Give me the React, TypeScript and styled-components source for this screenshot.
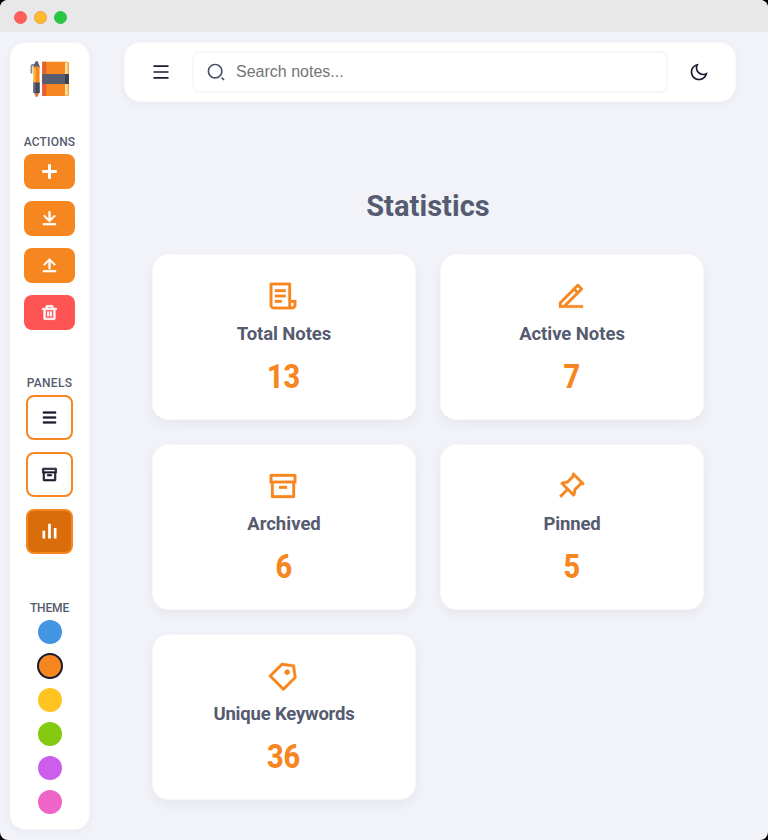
import React from "react";
import styled, { createGlobalStyle } from "styled-components";
import {
  RiAddLine,
  RiArchiveLine,
  RiBarChartLine,
  RiDeleteBinLine,
  RiDownloadLine,
  RiEdit2Line,
  RiFileList3Line,
  RiMenuLine,
  RiMoonLine,
  RiPriceTag3Line,
  RiPushpinLine,
  RiSearch2Line,
  RiUploadLine,
} from "react-icons/ri";

const GlobalStyle = createGlobalStyle`
  * { box-sizing: border-box; }
  body { margin: 0; background: #000; font-family: Roboto, sans-serif; }
  button { font: inherit; padding: 0; margin: 0; cursor: pointer; }
`;

const Window = styled.div`
  width: 768px;
  height: 840px;
  display: flex;
  flex-direction: column;
  overflow: hidden;
  border-radius: 8px;
  background: #f2f3f8;
`;

const TitleBar = styled.header`
  height: 32px;
  flex: none;
  display: flex;
  align-items: center;
  gap: 7px;
  padding: 2px 0 0 13.5px;
  background: #e8e8e8;
`;

const Light = styled.span<{ $fill: string; $edge: string }>`
  width: 13px;
  height: 13px;
  border-radius: 50%;
  background: ${(p) => p.$fill};
  border: 1px solid ${(p) => p.$edge};
`;

const Body = styled.div`
  flex: 1;
  min-height: 0;
  display: flex;
  gap: 34px;
  padding: 10px 32px 10px 10px;
`;

const Sidebar = styled.aside`
  width: 80px;
  flex: none;
  display: flex;
  flex-direction: column;
  align-items: center;
  padding: 16px 1px 0 0;
  background: #fff;
  border: 1px solid #f8f8fa;
  border-left-color: #fff;
  border-radius: 16px;
  box-shadow: 0 2px 8px rgba(30, 35, 60, 0.05);
`;

const Logo = styled.svg`
  width: 42px;
  height: 40px;
  flex: none;
  margin-bottom: 35px;
`;

const Group = styled.section<{ $gap: number; $after: number }>`
  display: flex;
  flex-direction: column;
  align-items: center;
  gap: ${(p) => p.$gap}px;
  margin-bottom: ${(p) => p.$after}px;
`;

const GroupLabel = styled.h2<{ $gap: number; $tracking: number }>`
  margin: 0 0 ${(p) => p.$gap}px;
  height: 16px;
  font-size: 12px;
  line-height: 16px;
  font-weight: 500;
  letter-spacing: ${(p) => p.$tracking}px;
  color: #555b6e;
`;

const ActionButton = styled.button<{ $danger?: boolean; $icon?: number }>`
  width: 51px;
  height: 35px;
  display: grid;
  place-items: center;
  border: 0;
  border-radius: 8px;
  color: #fff;
  background: ${(p) => (p.$danger ? "#ff5454" : "#f6861f")};
  svg {
    width: ${(p) => p.$icon ?? 17}px;
    height: ${(p) => p.$icon ?? 17}px;
    stroke: currentColor;
    stroke-width: 1.1;
  }
`;

const PanelButton = styled.button<{ $active?: boolean }>`
  width: 47px;
  height: 45px;
  display: grid;
  place-items: center;
  border: 2px solid #f6861f;
  border-radius: 8px;
  color: ${(p) => (p.$active ? "#fff" : "#1a1a2e")};
  background: ${(p) => (p.$active ? "#d96d0b" : "#fff")};
  svg {
    width: 17px;
    height: 17px;
    stroke: currentColor;
    stroke-width: ${(p) => (p.$active ? 1.8 : 1)};
  }
`;

const Swatch = styled.button<{ $color: string; $active?: boolean }>`
  width: ${(p) => (p.$active ? 26 : 24)}px;
  height: ${(p) => (p.$active ? 26 : 24)}px;
  margin: ${(p) => (p.$active ? "-1px -1px -1px 0" : "0 0 0 1px")};
  border-radius: 50%;
  border: ${(p) => (p.$active ? "2px solid #1a1a2e" : "0")};
  background: ${(p) => p.$color};
`;

const Content = styled.div`
  flex: 1;
  min-width: 0;
`;

const TopBar = styled.div`
  height: 60px;
  display: flex;
  align-items: center;
  padding: 0 26px;
  background: #fff;
  border: 1px solid #fafafc;
  border-radius: 16px;
  box-shadow: 0 2px 8px rgba(30, 35, 60, 0.05);
`;

const IconButton = styled.button`
  width: 20px;
  height: 20px;
  display: grid;
  place-items: center;
  border: 0;
  background: none;
  color: #1a1a2e;
  svg { width: 20px; height: 20px; }
`;

const Search = styled.label`
  flex: 1;
  height: 42px;
  margin: 0 21px;
  display: flex;
  align-items: center;
  gap: 10px;
  padding: 0 13px 0 12px;
  border: 2px solid #f7f7f8;
  border-radius: 8px;
  color: #4b5064;
  svg { width: 20px; height: 20px; flex: none; }
  input {
    flex: 1;
    min-width: 0;
    padding: 0;
    border: 0;
    outline: 0;
    background: none;
    font-family: "Liberation Sans", Arial, sans-serif;
    font-size: 16px;
  }
  input::placeholder { color: #757575; opacity: 1; }
`;

const Main = styled.main`
  padding: 83px 32px 0 28px;
`;

const Title = styled.h1`
  margin: 0 0 27px;
  height: 42px;
  line-height: 42px;
  text-align: center;
  font-size: 29px;
  font-weight: 700;
  letter-spacing: 0.05px;
  color: #555b70;
`;

const Cards = styled.div`
  display: grid;
  grid-template-columns: repeat(2, 264px);
  grid-auto-rows: 166px;
  gap: 24px;
`;

const Card = styled.article`
  display: flex;
  flex-direction: column;
  align-items: center;
  padding-top: 25px;
  background: #fff;
  border: 1px solid #f8f8fa;
  border-radius: 16px;
  box-shadow: 0 4px 12px rgba(30, 35, 60, 0.06);
  svg {
    width: 32px;
    height: 32px;
    margin-right: 2px;
    flex: none;
    color: #f6861f;
    stroke: currentColor;
    stroke-width: 0.2;
  }
`;

const CardLabel = styled.h3<{ $tracking: number }>`
  margin: 10px 0 0;
  line-height: 24px;
  font-size: 18.5px;
  font-weight: 700;
  letter-spacing: ${(p) => p.$tracking}px;
  color: #555b70;
`;

const CardValue = styled.p`
  margin: 10px 0 0;
  line-height: 40px;
  font-size: 34px;
  font-weight: 800;
  color: #f6861f;
  transform: scaleX(0.85);
`;

const stats = [
  { label: "Total Notes", value: 13, icon: RiFileList3Line, tracking: -0.08 },
  { label: "Active Notes", value: 7, icon: RiEdit2Line, tracking: -0.05 },
  { label: "Archived", value: 6, icon: RiArchiveLine, tracking: 0 },
  { label: "Pinned", value: 5, icon: RiPushpinLine, tracking: -0.15 },
  { label: "Unique Keywords", value: 36, icon: RiPriceTag3Line, tracking: -0.2 },
];

const NotebookLogo = () => (
  <Logo viewBox="0 0 42 40" aria-label="Notebook and pen">
    <path d="M6 6H3.6Q2.4 6 2.4 7.2V14.5" fill="none" stroke="#858b99" strokeWidth="1.8" />
    <path d="M4.6 7 6.5 2.6Q7.6 1.2 8.7 2.6L10.6 7v2h-6z" fill="#555b70" />
    <path d="M4.6 7.4h6V24h-6z" fill="#f6861f" />
    <path d="M4.6 9h2.2v15H4.6z" fill="#ffb52e" />
    <path d="M4.4 23.5h6.4V34H4.4z" fill="#42495b" />
    <path d="M4.4 23.5h2V34h-2z" fill="#626a7b" />
    <path d="M5 34h5.2L8.2 38H7z" fill="#df693d" />
    <path d="M13.2 2.8H38q1.8 0 1.8 1.8v30.6q0 1.8-1.8 1.8H13.2z" fill="#f6861f" />
    <path d="M13.2 2.8h4V37h-4z" fill="#e85d35" />
    <path d="M36 3.5h2.8v33H36z" fill="#ffe09a" />
    <path d="M38.8 3.5h1v33h-1z" fill="#f6a144" />
    <path d="M13.2 15h26.6v10H13.2z" fill="#555d6e" />
    <path d="M36 15h3.8v10H36z" fill="#383d4e" />
  </Logo>
);

export default function App() {
  return (
    <>
      <GlobalStyle />
      <Window>
        <TitleBar>
          <Light $fill="#ff5f57" $edge="#f2605a" />
          <Light $fill="#ffbd2e" $edge="#ee9c42" />
          <Light $fill="#28c840" $edge="#2fc052" />
        </TitleBar>
        <Body>
          <Sidebar>
            <NotebookLogo />
            <Group $gap={12} $after={45}>
              <GroupLabel $gap={-8} $tracking={0.2}>ACTIONS</GroupLabel>
              <ActionButton aria-label="Add" $icon={23}><RiAddLine /></ActionButton>
              <ActionButton aria-label="Download"><RiDownloadLine /></ActionButton>
              <ActionButton aria-label="Upload"><RiUploadLine /></ActionButton>
              <ActionButton aria-label="Delete" $danger><RiDeleteBinLine /></ActionButton>
            </Group>
            <Group $gap={12} $after={46}>
              <GroupLabel $gap={-8} $tracking={0.3}>PANELS</GroupLabel>
              <PanelButton aria-label="Notes"><RiMenuLine /></PanelButton>
              <PanelButton aria-label="Archive"><RiArchiveLine /></PanelButton>
              <PanelButton aria-label="Statistics" $active><RiBarChartLine /></PanelButton>
            </Group>
            <Group $gap={10} $after={0}>
              <GroupLabel $gap={-6} $tracking={-0.15}>THEME</GroupLabel>
              <Swatch aria-label="Blue" $color="#4295e3" />
              <Swatch aria-label="Orange" $color="#f6861f" $active />
              <Swatch aria-label="Yellow" $color="#ffc41f" />
              <Swatch aria-label="Green" $color="#83ca10" />
              <Swatch aria-label="Purple" $color="#cd5deb" />
              <Swatch aria-label="Pink" $color="#ee65c7" />
            </Group>
          </Sidebar>
          <Content>
            <TopBar>
              <IconButton aria-label="Menu"><RiMenuLine /></IconButton>
              <Search>
                <RiSearch2Line />
                <input placeholder="Search notes..." />
              </Search>
              <IconButton aria-label="Dark mode"><RiMoonLine /></IconButton>
            </TopBar>
            <Main>
              <Title>Statistics</Title>
              <Cards>
                {stats.map(({ label, value, icon: Icon, tracking }) => (
                  <Card key={label}>
                    <Icon />
                    <CardLabel $tracking={tracking}>{label}</CardLabel>
                    <CardValue>{value}</CardValue>
                  </Card>
                ))}
              </Cards>
            </Main>
          </Content>
        </Body>
      </Window>
    </>
  );
}
